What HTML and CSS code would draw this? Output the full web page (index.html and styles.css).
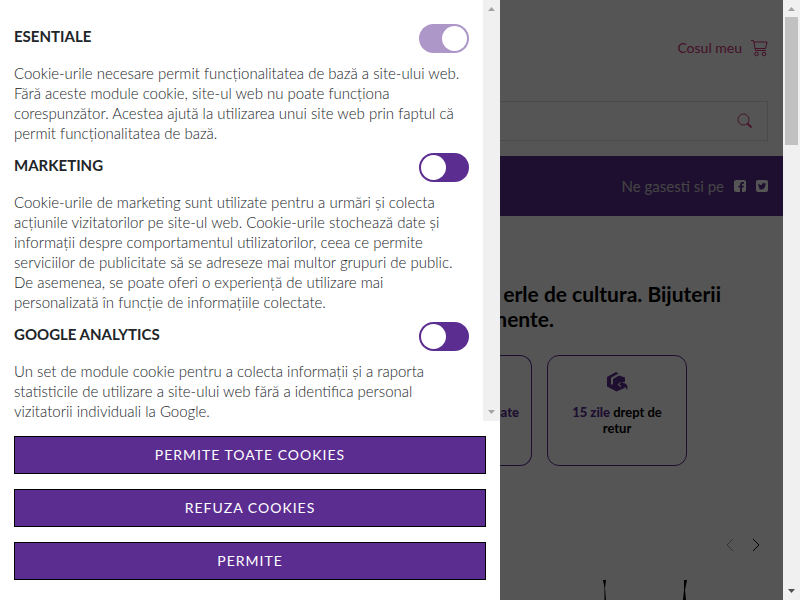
FILE: index.html
```html
<!DOCTYPE html>
<html lang="ro">
<head>
<meta charset="utf-8">
<title>Cookies</title>
<link rel="stylesheet" href="styles.css">
</head>
<body>
<aside class="panel">
  <div class="settings">
    <div class="options">
      <section class="option">
        <div class="option-head"><label for="essential">ESENTIALE</label><input class="switch" id="essential" type="checkbox" checked disabled></div>
        <p>Cookie-urile necesare permit funcționalitatea de bază a site-ului web.<br>Fără aceste module cookie, site-ul web nu poate funcționa<br>corespunzător. Acestea ajută la utilizarea unui site web prin faptul că<br>permit funcționalitatea de bază.</p>
      </section>
      <section class="option">
        <div class="option-head"><label for="marketing">MARKETING</label><input class="switch" id="marketing" type="checkbox"></div>
        <p>Cookie-urile de marketing sunt utilizate pentru a urmări și colecta<br>acțiunile vizitatorilor pe site-ul web. Cookie-urile stochează date și<br>informații despre comportamentul utilizatorilor, ceea ce permite<br>serviciilor de publicitate să se adreseze mai multor grupuri de public.<br>De asemenea, se poate oferi o experiență de utilizare mai<br>personalizată în funcție de informațiile colectate.</p>
      </section>
      <section class="option">
        <div class="option-head"><label for="analytics">GOOGLE ANALYTICS</label><input class="switch" id="analytics" type="checkbox"></div>
        <p>Un set de module cookie pentru a colecta informații și a raporta<br>statisticile de utilizare a site-ului web fără a identifica personal<br>vizitatorii individuali la Google.</p>
      </section>
    </div>
    <div class="scrollbar">
      <svg class="arrow" viewBox="0 0 17 17"><path d="M5 11h7L8.500 7z" fill="#a3a3a3"/></svg>
      <svg class="arrow" viewBox="0 0 17 17"><path d="M5 6h7L8.500 10z" fill="#a3a3a3"/></svg>
    </div>
  </div>
  <div class="actions">
    <button type="button">PERMITE TOATE COOKIES</button>
    <button type="button">REFUZA COOKIES</button>
    <button type="button">PERMITE</button>
  </div>
</aside>
<main class="shop">
  <header class="top">
    <a class="cart" href="#">Cosul meu
      <svg width="17" height="17" viewBox="0 0 17 17" fill="none" stroke="currentColor"><path d="M0 .5h2.500L4.500 10.500h10.500M3 2h13l-1.500 6.500H4.200"/><circle cx="5.500" cy="14" r="1.800"/><circle cx="13" cy="14" r="1.800"/></svg>
    </a>
    <form class="search">
      <input type="search" aria-label="Cauta">
      <button type="button" aria-label="Cauta"><svg width="16" height="16" viewBox="0 0 16 16" fill="none" stroke="currentColor"><circle cx="6.500" cy="6.500" r="5.500"/><path d="M10.500 10.500l4 4" stroke-width="1.800"/></svg></button>
    </form>
  </header>
  <nav class="social">
    <span>Ne gasesti si pe</span>
    <a href="#" aria-label="Facebook"><svg width="12" height="12" viewBox="0 0 12 12"><rect width="12" height="12" rx="2" fill="#fff"/><path d="M6 12V7.500H4.500V5.700H6V4.500C6 2.900 7 2 8.300 2H10v1.800H9c-.8 0-1 .4-1 1v.9h2l-.3 1.800H8V12z" fill="#5c2d91"/></svg></a>
    <a href="#" aria-label="Twitter"><svg width="12" height="12" viewBox="0 0 12 12"><rect width="12" height="12" rx="2" fill="#fff"/><path d="M2 8.800c1 0 1.700-.2 2.200-.6-.8-.1-1.200-.5-1.400-1h.6C2.600 6.900 2.200 6.300 2.200 5.500l.6.200C2.200 5.100 2 4.200 2.500 3.400 3.400 4.500 4.600 5 6 5.100 5.800 3.700 6.600 3 7.600 3c.5 0 .9.200 1.200.5l1.100-.4-.6.900.9-.2-.8.900C9.400 7.500 7.600 9.600 4.800 9.600 3.700 9.600 2.700 9.300 2 8.800z" fill="#5c2d91"/></svg></a>
  </nav>
  <h1><span>erle de cultura. Bijuterii</span><span class="second">mente.</span></h1>
  <div class="benefits">
    <div class="card first"><p><b>ate</b></p></div>
    <div class="card">
      <svg width="21" height="20" viewBox="0 0 21 20" fill="#5c2d91"><path d="M0 5L9 0l2.500 1.500L4 5.800V13l2-1V7l6-3.500L18 5.500v4.200l-5 .8-2.500 2 3.500 3 .5-1.800c2 0 3 .3 3.500 2L9.500 19.500 0 14.500z"/><path d="M12 12.300l4-3v1.700c3.500.2 5.500 2.500 4 7.500-.3-2.500-1.500-3.800-4-4v1.600z"/></svg>
      <p><b>15 zile</b> drept de<br>retur</p>
    </div>
  </div>
  <div class="arrows">
    <button type="button" class="off" aria-label="Inapoi"><svg width="8" height="14" viewBox="0 0 8 14"><path d="M7 1L1 7l6 6"/></svg></button>
    <button type="button" aria-label="Inainte"><svg width="8" height="14" viewBox="0 0 8 14"><path d="M1 1l6 6-6 6"/></svg></button>
  </div>
  <svg class="product" width="84" height="20" viewBox="0 0 84 20"><path d="M0 0h3L2 8l1 12H1.500V8z M81 0h3L82 10l1 10h-3l1-10z"/></svg>
</main>
<div class="scrollbar page">
  <svg class="arrow" viewBox="0 0 17 17"><path d="M5 11h7L8.500 7z" fill="#a3a3a3"/></svg>
  <div class="thumb"></div>
  <svg class="arrow" viewBox="0 0 17 17"><path d="M5 6h7L8.500 10z" fill="#505050"/></svg>
</div>
</body>
</html>
```
FILE: styles.css
```css
* { box-sizing: border-box; }
body { margin: 0; display: flex; height: 100vh; font-family: Lato, sans-serif; font-size: 14px; line-height: 20px; color: #212529; overflow: hidden; }
p, h1 { margin: 0; }
a { color: inherit; text-decoration: none; }
button { font: inherit; padding: 0; border: 0; background: none; color: inherit; }
svg { display: block; }

.panel { flex: 0 0 500px; background: #fff; }
.settings { display: flex; }
.options { flex: 1; padding: 24px 14px 0; }
.option p { font-weight: 300; font-size: 15px; white-space: nowrap; padding: 10px 0; }
.option:last-child p { padding-bottom: 0; }
.option-head { display: flex; justify-content: space-between; height: 29px; align-items: flex-start; }
.option-head label { font-size: 15px; line-height: 25px; font-weight: 700; }
.switch { appearance: none; margin: 0; width: 50px; height: 29px; border-radius: 15px; background: #5c2d91; padding: 2px; display: flex; }
.switch::before { content: ""; width: 25px; height: 25px; border-radius: 50%; background: #fff; }
.switch:checked { justify-content: flex-end; }
.switch:disabled { background: #ad96c8; }

.scrollbar { flex: 0 0 17px; background: #f0f0f0; display: flex; flex-direction: column; justify-content: space-between; }
.arrow { width: 17px; height: 17px; }
.page .thumb { height: 128px; margin: 0 2px auto; background: #c1c1c1; }

.actions { display: flex; flex-direction: column; gap: 15px; padding: 15px 14px 20px; }
.actions button { height: 38px; background: #5c2d91; border: 1px solid #000; color: #fff; font-size: 14px; letter-spacing: 1px; }

.shop { flex: 1; min-width: 0; position: relative; background: #fff; overflow: hidden; color: #000; }
.shop::after { content: ""; position: absolute; inset: 0; background: rgba(0, 0, 0, 0.667); }
.top { height: 156px; padding: 38px 15px 0 0; color: #cc3377; }
.cart { display: flex; justify-content: flex-end; align-items: center; gap: 9px; }
.search { display: flex; height: 40px; margin-top: 43px; border: 1px solid #ddd; border-left: 0; }
.search input { flex: 1; min-width: 0; border: 0; background: none; }
.search button { width: 44px; display: grid; place-items: center; }
.social { display: flex; align-items: center; justify-content: flex-end; gap: 10px; height: 60px; padding-right: 15px; background: #5c2d91; color: #ccc; font-size: 15px; }
h1 { padding-top: 65px; font-size: 21px; line-height: 25px; font-weight: 700; }
h1 span { display: flex; justify-content: flex-end; width: 221px; white-space: nowrap; }
h1 .second { width: 54px; }
.benefits { display: flex; gap: 15px; margin-top: 24px; }
.card { width: 140px; height: 111px; padding-top: 16px; border: 1px solid #5c2d91; border-radius: 12px; display: flex; flex-direction: column; align-items: center; gap: 12px; font-size: 13px; line-height: 16px; font-weight: 700; text-align: center; }
.card.first { width: 32px; border-left: 0; border-radius: 0 12px 12px 0; padding: 48px 12px 0 0; align-items: flex-end; }
.card b { color: #5c2d91; }
.arrows { display: flex; justify-content: flex-end; gap: 18px; padding: 72px 23px 0 0; }
.arrows path { fill: none; stroke: #000; }
.arrows .off { opacity: 0.4; }
.product { margin: 28px 0 0 103px; }
```
